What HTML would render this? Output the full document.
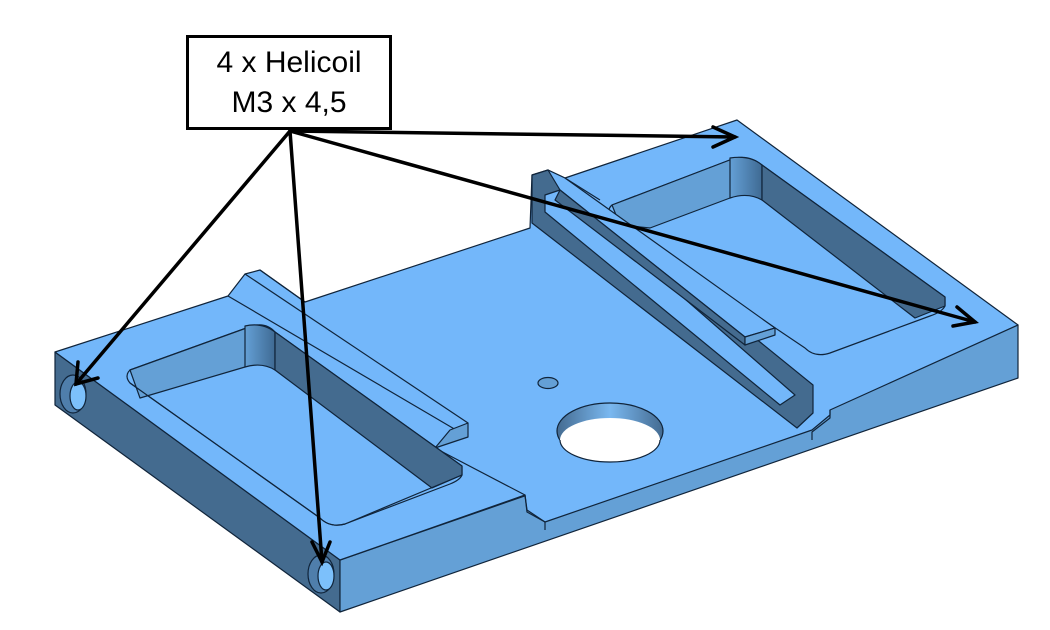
<!DOCTYPE html>
<html><head><style>
html,body{margin:0;padding:0;background:#fff;}
svg{display:block;}
</style></head><body>
<svg width="1050" height="630" viewBox="0 0 1050 630" xmlns="http://www.w3.org/2000/svg" font-family="Liberation Sans, sans-serif">
<defs>
<linearGradient id="hole" x1="0" x2="1"><stop offset="0" stop-color="#446b91"/><stop offset="0.5" stop-color="#7ab8f0"/><stop offset="1" stop-color="#446b91"/></linearGradient>
<linearGradient id="fil" x1="0" x2="1"><stop offset="0" stop-color="#64a0d6"/><stop offset="1" stop-color="#3f6a93"/></linearGradient>
</defs>
<g stroke="#10243a" stroke-width="1.2" stroke-linejoin="round">
<polygon points="55,352 340,560 340,612 55,405" fill="#446b8f"/>
<polygon points="340,560 1018,325 1018,378 340,612" fill="#64a0d6"/>
<polygon points="55,352 228,296 245,274 260,270 305,302 530,228 532,175 548,170 565,178 737,120 1018,325 830,410 830,415 812,430 545,522 527,510 525,495 340,560" fill="#73b7fa"/>
<polyline points="830,410 830,418 812,432 812,440" fill="none"/>
<polyline points="525,495 527,512 545,522 545,530" fill="none"/>
<polyline points="228,296 468,437" fill="none"/>
<polyline points="245,274 468,423" fill="none"/>
<polyline points="260,270 305,302" fill="none"/>
<polygon points="468,423 468,437 435,448 450,430" fill="#64a0d6"/>
<polyline points="435,448 525,495" fill="none"/>
<path d="M130,370 L252,326 Q266,322 275,332 L462,466 L462,475 Q460,480 450,484 L345,524 Q330,528 320,518 L130,383 Q124,376 130,370 Z" fill="#73b7fa"/>
<path d="M130,370 L252,326 L245,367 L140,398 Z" fill="#64a0d6"/>
<path d="M245,326 Q262,322 275,332 L275,370 Q262,362 245,367 Z" fill="url(#fil)"/>
<path d="M275,332 L462,466 L462,475 L432,488 L275,370 Z" fill="#446b8f"/>
<path d="M130,383 L320,518 Q330,528 345,524 L462,475" fill="none"/>
<path d="M612,205 L735,158 Q750,155 762,165 L945,297 L945,306 Q942,312 930,316 L830,353 Q815,358 805,348 L612,218 Q606,210 612,205 Z" fill="#73b7fa"/>
<path d="M612,205 L735,158 L730,198 L650,228 L620,225 Z" fill="#64a0d6"/>
<path d="M730,158 Q750,155 762,165 L762,200 Q748,192 730,198 Z" fill="url(#fil)"/>
<path d="M762,165 L945,297 L945,306 L915,318 L762,200 Z" fill="#446b8f"/>
<polygon points="532,175 548,170 813,385 813,413 797,428 532,223" fill="#446b8f"/>
<polygon points="545,195 560,190 795,395 780,405 545,212" fill="#73b7fa"/>
<polygon points="548,170 565,178 775,328 745,337 560,190" fill="#73b7fa"/>
<polygon points="560,190 745,337 745,345 555,200" fill="#446b8f"/>
<polygon points="745,337 775,328 775,335 745,345" fill="#64a0d6"/>
<polyline points="565,178 600,200" fill="none"/>
<ellipse cx="548" cy="383" rx="10" ry="5.5" fill="#64a0d6"/>
<ellipse cx="610" cy="431" rx="53" ry="28" fill="url(#hole)"/>
<ellipse cx="610" cy="440" rx="50" ry="22" fill="#fff" stroke="none"/>
<path d="M560,440 A50,22 0 0 0 660,440" fill="none"/>
<ellipse cx="73" cy="394" rx="13" ry="19" fill="#4f7eab"/>
<ellipse cx="78" cy="396" rx="8" ry="14" fill="#7cc0fb"/>
<ellipse cx="321" cy="574" rx="13" ry="19" fill="#4f7eab"/>
<ellipse cx="326" cy="576" rx="8" ry="14" fill="#7cc0fb"/>
</g>
<g stroke="#000" stroke-width="3.5" fill="none" stroke-linecap="round">
<line x1="290" y1="131" x2="76" y2="384"/>
<polyline points="78,362 76,384 98,378"/>
<line x1="290" y1="131" x2="322" y2="562"/>
<polyline points="312,542 322,562 330,542"/>
<line x1="290" y1="131" x2="735" y2="137"/>
<polyline points="713,127 735,137 713,147"/>
<line x1="290" y1="131" x2="975" y2="322"/>
<polyline points="957,307 975,322 953,326"/>
</g>
<rect x="187.5" y="36.5" width="203" height="92" fill="#fff" stroke="#000" stroke-width="3"/>
<text x="289" y="72" font-size="30" text-anchor="middle" fill="#000">4 x Helicoil</text>
<text x="289" y="112" font-size="30" text-anchor="middle" fill="#000">M3 x 4,5</text>
</svg>
</body></html>
